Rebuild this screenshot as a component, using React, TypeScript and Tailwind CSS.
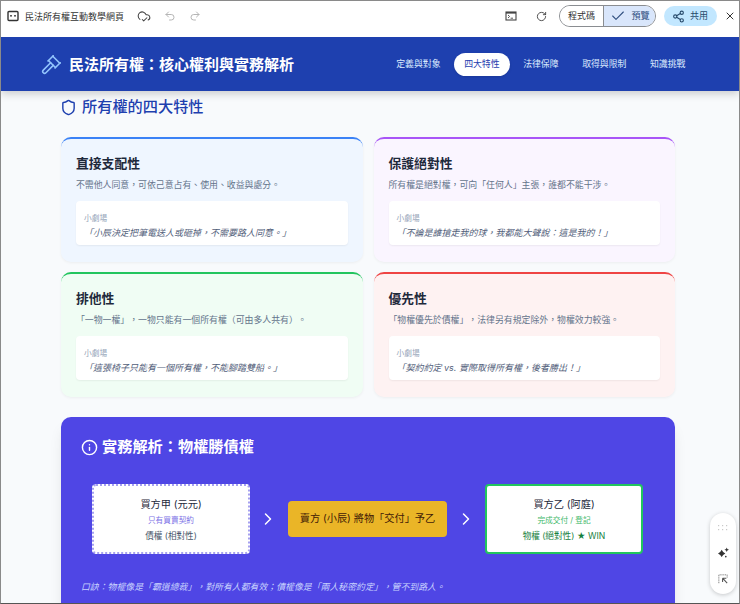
import { Check, ChevronRight, CloudCheck, Gavel, Info, RotateCw, Redo2, Share2, Shield, Undo2, X } from "lucide-react";

const cards = [
    {
        title: "直接支配性",
        desc: "不需他人同意，可依己意占有、使用、收益與處分。",
        quote: "「小辰決定把筆電送人或砸掉，不需要路人同意。」",
        box: "bg-[#eff6ff] border-[#3b82f6]",
    },
    {
        title: "保護絕對性",
        desc: "所有權是絕對權，可向「任何人」主張，誰都不能干涉。",
        quote: "「不論是誰搶走我的球，我都能大聲說：這是我的！」",
        box: "bg-[#faf5ff] border-[#a855f7]",
    },
    {
        title: "排他性",
        desc: "「一物一權」，一物只能有一個所有權（可由多人共有）。",
        quote: "「這張椅子只能有一個所有權，不能腳踏雙船。」",
        box: "bg-[#f0fdf4] border-[#22c55e]",
    },
    {
        title: "優先性",
        desc: "「物權優先於債權」，法律另有規定除外，物權效力較強。",
        quote: "「契約約定 vs. 實際取得所有權，後者勝出！」",
        box: "bg-[#fef2f2] border-[#ef4444]",
    },
];

const navItems = ["定義與對象", "四大特性", "法律保障", "取得與限制", "知識挑戰"];

function Toolbar() {
    return (
        <div className="h-[36px] pb-[6px] flex items-center bg-white text-[#3c4043] shrink-0 relative z-20">
            {/* app icon */}
            <svg viewBox="0 0 12 12" className="w-[12px] h-[12px] ml-[6px] text-[#333]" fill="none" stroke="currentColor" strokeWidth="1.4">
                <rect x="1" y="1.5" width="10" height="9" rx="1" />
                <rect x="3.2" y="5" width="1.6" height="1.6" fill="currentColor" stroke="none" />
                <rect x="7.2" y="5" width="1.6" height="1.6" fill="currentColor" stroke="none" />
            </svg>
            <span className="ml-[6px] text-[9px] leading-none text-[#333]">民法所有權互動教學網頁</span>
            <CloudCheck className="w-[14px] h-[14px] ml-[13px] text-[#444]" strokeWidth={1.8} />
            <Undo2 className="w-[12px] h-[12px] ml-[13px] text-[#b5b5b5]" />
            <Redo2 className="w-[12px] h-[12px] ml-[13px] text-[#b5b5b5]" />
            <div className="ml-auto flex items-center">
                <svg viewBox="0 0 12 12" className="w-[12px] h-[12px] text-[#444]" fill="none" stroke="currentColor">
                    <rect x="1" y="2" width="10" height="8" strokeWidth="1.1" />
                    <rect x="1" y="2" width="10" height="1.6" fill="currentColor" stroke="none" />
                    <path d="M3 5 L4.6 6.5 L3 8 M5.6 8.2 H8" strokeWidth="0.9" />
                </svg>
                <RotateCw className="w-[11px] h-[11px] ml-[18.5px] text-[#444]" />
                <div className="ml-[12.5px] h-[22px] w-[97px] flex rounded-full border border-[#8a8d91] overflow-hidden text-[9px]">
                    <div className="w-[43px] flex items-center justify-center bg-white text-[#333]">程式碼</div>
                    <div className="flex-1 flex items-center gap-[5.5px] pl-[6px] bg-[#d9e6fb] border-l border-[#8a8d91] text-[#2f4f7f]">
                        <Check className="w-[16px] h-[16px]" strokeWidth={1.6} />
                        <span>預覽</span>
                    </div>
                </div>
                <div className="ml-[8px] h-[20px] w-[53px] flex items-center gap-[5.5px] pl-[7.5px] rounded-full bg-[#c2e7ff] text-[9px] text-[#274a6b]">
                    <Share2 className="w-[13px] h-[13px]" />
                    <span>共用</span>
                </div>
                <X className="w-[12px] h-[12px] ml-[7px] mr-[3px] text-[#333]" />
            </div>
        </div>
    );
}

function Header() {
    return (
        <header className="h-[54px] flex items-center bg-[#1e40af] shadow-[0_3px_8px_rgba(0,0,0,0.18)] shrink-0 relative z-10">
            <Gavel className="w-[21px] h-[21px] ml-[40px] text-[#93c5fd]" strokeWidth={1.8} />
            <h1 className="ml-[7px] text-[15px] leading-none font-semibold text-white">民法所有權：核心權利與實務解析</h1>
            <nav className="ml-auto mr-[43px] flex items-center gap-[2.5px] text-[8.9px] text-[#dbeafe]">
                {navItems.map((item, i) => (
                    <span
                        key={item}
                        className={i === 1 ? "h-[23px] px-[10.5px] flex items-center rounded-full bg-white text-[#1e40af] shadow-sm" : "px-[10.5px]"}
                    >
                        {item}
                    </span>
                ))}
            </nav>
        </header>
    );
}

function Card({ title, desc, quote, box }: (typeof cards)[number]) {
    return (
        <div className={`h-[125px] rounded-[10px] border-t-[2px] px-[15px] pt-[15px] shadow-[0_1px_3px_rgba(0,0,0,0.05)] ${box}`}>
            <h3 className="text-[12.8px] leading-[20px] font-semibold text-[#1e293b]">{title}</h3>
            <p className="mt-[4px] text-[8.9px] leading-[14px] text-[#64748b]">{desc}</p>
            <div className="mt-[9px] h-[44px] rounded-[4px] bg-white pl-[8px] pt-[12px] shadow-[0_1px_2px_rgba(0,0,0,0.06)]">
                <div className="text-[7.7px] leading-[12px] text-[#94a3b8]">小劇場</div>
                <div className="mt-[1px] text-[9px] leading-[14px] italic text-[#52607a]">{quote}</div>
            </div>
        </div>
    );
}

function Panel() {
    return (
        <section className="mt-[20px] h-[200px] rounded-t-[10px] bg-[#4f46e5] pl-[20px] pr-[31px] pt-[20px] shadow-lg">
            <h2 className="flex items-center gap-[4px] text-[15.2px] leading-[20px] font-semibold text-white">
                <Info className="w-[17px] h-[17px]" />
                實務解析：物權勝債權
            </h2>
            <div className="mt-[27px] flex items-center">
                <div className="ml-[11px] w-[158px] h-[70px] rounded-[4px] border-[2px] border-dotted border-[#a5a0f0] bg-white flex flex-col items-center justify-center pt-[1px]">
                    <div className="text-[10.2px] leading-[15px] text-[#1e293b]">買方甲 (元元)</div>
                    <div className="mt-[3px] text-[7.7px] leading-[12px] text-[#7c72e6]">只有買賣契約</div>
                    <div className="mt-[3px] text-[8.6px] leading-[13px] text-[#475569]">債權 (相對性)</div>
                </div>
                <ChevronRight className="w-[20px] h-[20px] ml-[8px] text-white" strokeWidth={1.8} />
                <div className="ml-[10px] w-[159px] h-[36px] rounded-[4px] bg-[#eab527] flex items-center justify-center text-[10.2px] text-[#422006]">
                    賣方 (小辰) 將物「交付」予乙
                </div>
                <ChevronRight className="w-[20px] h-[20px] ml-[9px] text-white" strokeWidth={1.8} />
                <div className="ml-[9px] w-[158px] h-[70px] rounded-[4px] border-[2px] border-[#22c55e] bg-white flex flex-col items-center justify-center pt-[1px]">
                    <div className="text-[10.2px] leading-[15px] text-[#1e293b]">買方乙 (阿庭)</div>
                    <div className="mt-[3px] text-[7.7px] leading-[12px] text-[#3fb96b]">完成交付 / 登記</div>
                    <div className="mt-[3px] text-[8.6px] leading-[13px] text-[#15803d]">物權 (絕對性) ★ WIN</div>
                </div>
            </div>
            <p className="mt-[26px] text-[8.9px] leading-[14px] italic text-[#c7d2fe]">
                口訣：物權像是「霸道總裁」，對所有人都有效；債權像是「兩人秘密約定」，管不到路人。
            </p>
        </section>
    );
}

function FloatingTools() {
    return (
        <div className="absolute right-[3px] top-[512px] z-30 w-[26px] h-[81px] rounded-full bg-white shadow-[0_1px_4px_rgba(0,0,0,0.2)] flex flex-col items-center">
            <svg viewBox="0 0 10 6" className="w-[10px] h-[6px] mt-[12px] text-[#c9c9c9]" fill="currentColor">
                <rect x="0" y="0" width="1.2" height="1.2" />
                <rect x="4" y="0" width="1.2" height="1.2" />
                <rect x="8" y="0" width="1.2" height="1.2" />
                <rect x="0" y="4" width="1.2" height="1.2" />
                <rect x="4" y="4" width="1.2" height="1.2" />
                <rect x="8" y="4" width="1.2" height="1.2" />
            </svg>
            <svg viewBox="0 0 12 12" className="w-[11px] h-[11px] mt-[16px] text-[#333]" fill="currentColor">
                <path d="M4 3 L5.6 5.4 L8 7 L5.6 8.6 L4 11 L2.4 8.6 L0 7 L2.4 5.4 Z" />
                <path d="M9.5 0.5 L10.2 2.3 L12 3 L10.2 3.7 L9.5 5.5 L8.8 3.7 L7 3 L8.8 2.3 Z" />
                <circle cx="8.5" cy="10.5" r="0.9" />
            </svg>
            <svg viewBox="0 0 12 12" className="w-[10px] h-[10px] mt-[16px] text-[#555]" fill="none" stroke="currentColor">
                <path d="M1 11 V1 H11 V5" strokeDasharray="1.2 1" />
                <path d="M5.5 5 H10 M5.5 5 V9.5 M5.5 5 L11 11" strokeWidth="1.3" />
            </svg>
        </div>
    );
}

export default function App() {
    return (
        <div lang="zh-TW" className="relative w-[740px] h-[604px] overflow-hidden flex flex-col bg-white border border-[#8a8a8a] border-b-[#555] [text-spacing-trim:space-all] font-['Inter','Noto_Sans_CJK_TC',sans-serif]">
            <Toolbar />
            <Header />
            <main className="flex-1 min-h-0 overflow-hidden bg-[#f8fafc] pl-[60px] pr-[64px]">
                <h2 className="mt-[6px] flex items-center gap-[5px] text-[15.2px] leading-[20px] font-medium text-[#1e40af]">
                    <Shield className="w-[17px] h-[17px] -ml-[1px]" />
                    所有權的四大特性
                </h2>
                <div className="mt-[20px] grid grid-cols-2 gap-x-[11px] gap-y-[10px]">
                    {cards.map((card) => (
                        <Card key={card.title} {...card} />
                    ))}
                </div>
                <Panel />
            </main>
            <FloatingTools />
        </div>
    );
}
